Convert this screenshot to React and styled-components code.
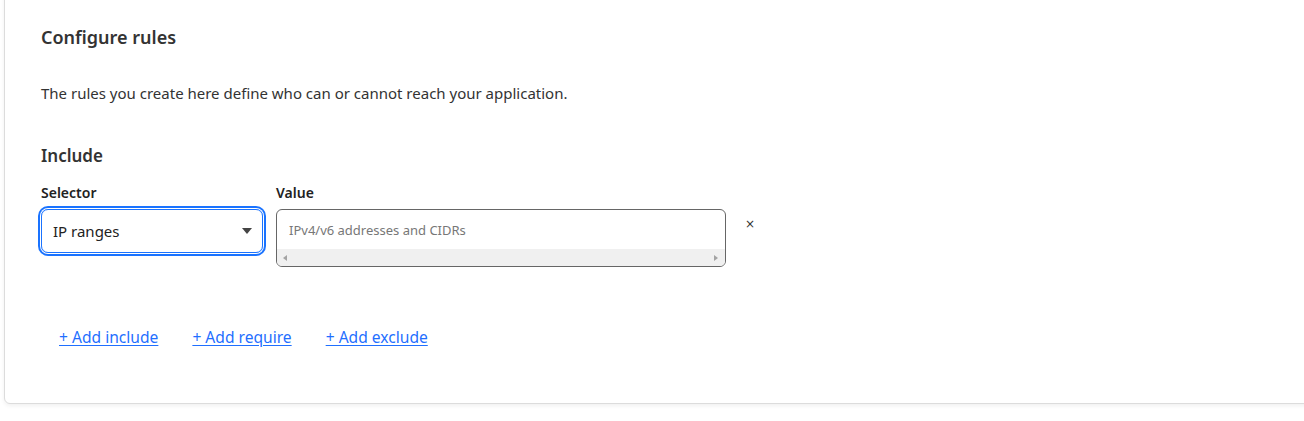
import styled, { createGlobalStyle } from "styled-components";

const Global = createGlobalStyle`
  html, body {
    margin: 0;
    background: #fff;
    font-family: "Noto Sans", "Open Sans", Arial, sans-serif;
    color: #313131;
  }
  body {
    overflow: hidden;
  }
`;

const Page = styled.div`
  width: 1304px;
  height: 421px;
  padding-left: 4px;
  box-sizing: border-box;
  overflow: hidden;
`;

const Card = styled.section`
  margin-top: -10px;
  margin-right: -20px;
  height: 414px;
  box-sizing: border-box;
  border: 1px solid #dcdcdc;
  border-radius: 6px;
  box-shadow: 0 2px 4px rgba(0, 0, 0, 0.06);
  background: #fff;
  padding: 34px 0 0 36px;
  display: flex;
  flex-direction: column;
`;

const Title = styled.h2`
  margin: 0;
  font-size: 18px;
  line-height: 24px;
  font-weight: 600;
  color: #333;
`;

const Text = styled.p`
  margin: 33px 0 0;
  font-size: 15px;
  line-height: 22px;
  color: #333;
`;

const Section = styled.h3`
  margin: 40px 0 0;
  font-size: 17px;
  line-height: 24px;
  font-weight: 600;
  color: #333;
`;

const Row = styled.div`
  display: flex;
  align-items: flex-start;
  gap: 13px;
  margin-top: 15px;
`;

const Field = styled.div`
  display: flex;
  flex-direction: column;
  gap: 6px;
  width: ${(p) => p.$w}px;
`;

const Label = styled.label`
  font-size: 14px;
  line-height: 20px;
  font-weight: 600;
  color: #222;
`;

const Select = styled.div`
  height: 44px;
  box-sizing: border-box;
  border: 1px solid #1a73ff;
  border-radius: 7px;
  box-shadow: 0 0 0 1px #fff, 0 0 0 3px #1a73ff;
  display: flex;
  align-items: center;
  justify-content: space-between;
  padding: 0 10px 0 11px;
  font-size: 15px;
  color: #222;
`;

const Caret = styled.span`
  width: 0;
  height: 0;
  border-left: 5px solid transparent;
  border-right: 5px solid transparent;
  border-top: 6px solid #444;
`;

const Area = styled.div`
  height: 58px;
  box-sizing: border-box;
  border: 1px solid #666;
  border-radius: 6px;
  overflow: hidden;
  display: flex;
  flex-direction: column;
`;

const Placeholder = styled.div`
  flex: 1;
  padding: 10px 0 0 12px;
  font-size: 13px;
  line-height: 20px;
  color: #777;
`;

const Track = styled.div`
  height: 17px;
  background: #f0f0f0;
  display: flex;
  align-items: center;
  justify-content: space-between;
  padding: 0 7px 0 6px;
`;

const Arrow = styled.span`
  width: 0;
  height: 0;
  border-top: 3.5px solid transparent;
  border-bottom: 3.5px solid transparent;
  ${(p) =>
    p.$dir === "left"
      ? "border-right: 4px solid #a3a3a3;"
      : "border-left: 4px solid #a3a3a3;"}
`;

const Remove = styled.button`
  margin: 34px 0 0 6px;
  padding: 0;
  border: 0;
  background: none;
  font-family: "DejaVu Sans", sans-serif;
  font-size: 12px;
  line-height: 14px;
  color: #333;
  cursor: pointer;
`;

const Links = styled.div`
  display: flex;
  gap: 34px;
  margin: 59px 0 0 18px;
`;

const Link = styled.a`
  font-size: 15.6px;
  line-height: 22px;
  color: #1f6fff;
  text-decoration: underline;
  text-underline-offset: 2px;
  cursor: pointer;
`;

export default function App() {
  return (
    <Page>
      <Global />
      <Card>
        <Title>Configure rules</Title>
        <Text>The rules you create here define who can or cannot reach your application.</Text>
        <Section>Include</Section>
        <Row>
          <Field $w={222}>
            <Label>Selector</Label>
            <Select>
              <span>IP ranges</span>
              <Caret />
            </Select>
          </Field>
          <Field $w={450}>
            <Label>Value</Label>
            <Area>
              <Placeholder>IPv4/v6 addresses and CIDRs</Placeholder>
              <Track>
                <Arrow $dir="left" />
                <Arrow $dir="right" />
              </Track>
            </Area>
          </Field>
          <Remove aria-label="Remove">×</Remove>
        </Row>
        <Links>
          <Link>+ Add include</Link>
          <Link>+ Add require</Link>
          <Link>+ Add exclude</Link>
        </Links>
      </Card>
    </Page>
  );
}
